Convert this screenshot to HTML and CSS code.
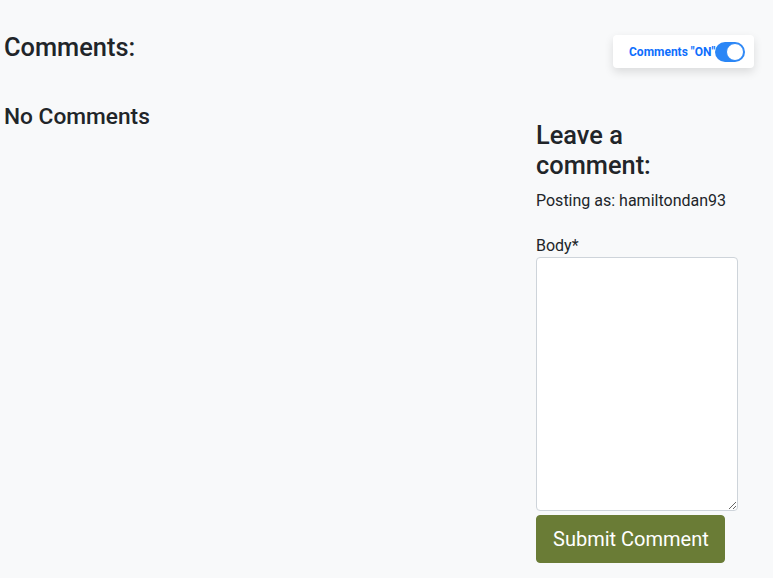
FILE: index.html
```html
<!DOCTYPE html>
<html lang="en">
<head>
<meta charset="utf-8">
<title>Comments</title>
<link rel="stylesheet" href="styles.css">
</head>
<body>
<div class="page">
  <div class="top-row">
    <h3 class="title">Comments:</h3>
    <div class="toggle-card">
      <span class="toggle-label">Comments "ON"</span>
      <span class="switch"><span class="knob"></span></span>
    </div>
  </div>
  <div class="main-row">
    <div class="left-col">
      <h4 class="no-comments">No Comments</h4>
    </div>
    <div class="right-col">
      <h3 class="leave">Leave a<br>comment:</h3>
      <p class="posting">Posting as: hamiltondan93</p>
      <form class="form">
        <label class="label" for="body">Body*</label>
        <textarea id="body" class="textarea"></textarea>
        <button type="button" class="btn">Submit Comment</button>
      </form>
    </div>
  </div>
</div>
</body>
</html>
```

FILE: styles.css
```css
html, body {
  margin: 0;
  padding: 0;
  background: #f8f9fa;
}
body {
  font-family: Roboto, "Liberation Sans", Arial, sans-serif;
  color: #212529;
  font-size: 16px;
  line-height: 1.5;
}
.page {
  padding: 32px 0 0 4px;
  height: 578px;
  box-sizing: border-box;
  overflow: hidden;
}
.top-row {
  display: flex;
  justify-content: space-between;
  align-items: flex-start;
  padding-right: 19px;
}
.title {
  margin: 0;
  font-size: 25.4px;
  font-weight: 500;
  line-height: 1.2;
}
.toggle-card {
  margin-top: 3px;
  width: 141px;
  height: 33px;
  box-sizing: border-box;
  background: #fff;
  border-radius: 4px;
  box-shadow: 0 4px 10px rgba(0, 0, 0, 0.12);
  display: flex;
  align-items: center;
  padding-left: 16px;
}
.toggle-label {
  font-size: 12px;
  font-weight: 700;
  color: #0d6efd;
  line-height: 1;
  white-space: nowrap;
}
.switch {
  width: 30px;
  height: 20px;
  border-radius: 10px;
  background: #2a86f6;
  display: flex;
  align-items: center;
  justify-content: flex-end;
  padding-right: 1px;
  box-sizing: border-box;
  flex-shrink: 0;
}
.knob {
  width: 18px;
  height: 18px;
  border-radius: 50%;
  background: #fff;
  box-sizing: border-box;
  border: 1px solid #2a86f6;
}
.main-row {
  display: flex;
  margin-top: 35px;
}
.left-col {
  width: 532px;
  flex-shrink: 0;
}
.no-comments {
  margin: 0;
  font-size: 22.7px;
  font-weight: 500;
  line-height: 1.2;
}
.right-col {
  padding-top: 17px;
  width: 210px;
}
.leave {
  margin: 0 0 8px;
  font-size: 25.4px;
  font-weight: 500;
  line-height: 1.2;
}
.posting {
  margin: 0 0 21px;
}
.form {
  display: flex;
  flex-direction: column;
  align-items: flex-start;
}
.label {
  display: block;
  line-height: 23px;
}
.textarea {
  display: block;
  width: 202px;
  height: 254px;
  box-sizing: border-box;
  margin: 0;
  border: 1px solid #ced4da;
  border-radius: 4px;
  background: #fff;
  font-family: inherit;
  font-size: 16px;
}
.btn {
  margin-top: 4px;
  background: #6a7c36;
  color: #fff;
  border: 1px solid #6a7c36;
  border-radius: 4px;
  padding: 0 16px;
  font-family: inherit;
  font-size: 20px;
  line-height: 1.5;
  height: 48px;
  width: 189px;
  box-sizing: border-box;
  white-space: nowrap;
}
```
